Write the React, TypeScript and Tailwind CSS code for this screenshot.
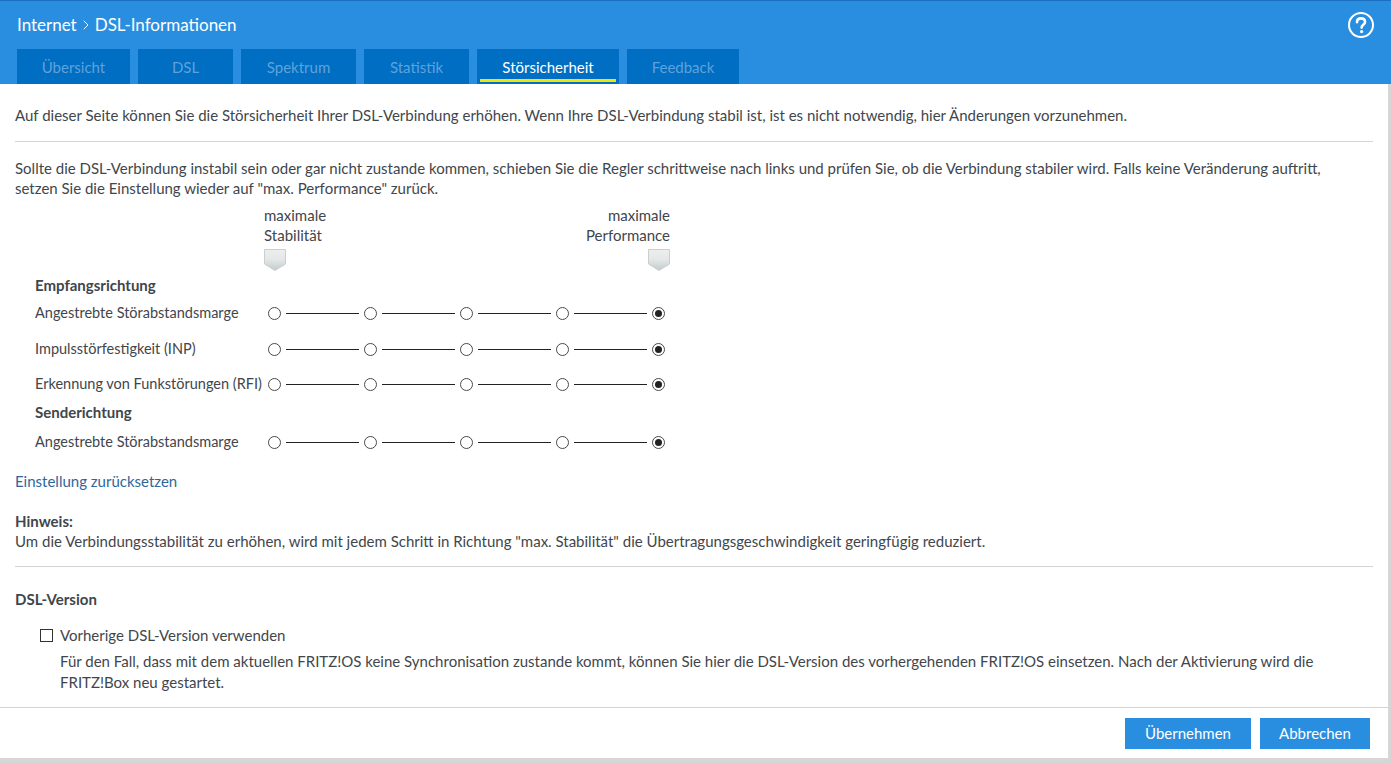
import { ChevronRight } from "lucide-react"

const tabs = [
  { name: "Übersicht", w: "w-[113px]" },
  { name: "DSL", w: "w-[95px]" },
  { name: "Spektrum", w: "w-[115px]" },
  { name: "Statistik", w: "w-[105px]" },
  { name: "Störsicherheit", w: "w-[142px]", active: true },
  { name: "Feedback", w: "w-[112px]" },
]

const Radio = ({ checked }: { checked?: boolean }) => (
  <span className="w-[13px] h-[13px] rounded-full border border-[#4a4a4a] bg-white flex items-center justify-center shrink-0">
    {checked && <span className="w-[7px] h-[7px] rounded-full bg-[#222]"></span>}
  </span>
)

const Track = () => (
  <div className="flex items-center w-[398px]">
    {[0, 1, 2, 3, 4].map((i) => (
      <div key={i} className="flex items-center">
        <Radio checked={i === 4} />
        {i < 4 && <span className="h-px w-[73px] bg-[#222] mx-[5px]"></span>}
      </div>
    ))}
  </div>
)

const Marker = () => (
  <svg width="22" height="22" viewBox="0 0 22 22">
    <defs>
      <linearGradient id="mk" x1="0" y1="0" x2="0" y2="1">
        <stop offset="0" stopColor="#ededed" />
        <stop offset="0.45" stopColor="#e6e8e8" />
        <stop offset="1" stopColor="#c3cccb" />
      </linearGradient>
    </defs>
    <path d="M0.5 0.5 H21.5 V15 L11 21.5 L0.5 15 Z" fill="url(#mk)" stroke="#c9cfcf" strokeWidth="1" />
  </svg>
)

const Row = ({ label, className }: { label: string; className: string }) => (
  <div className={`flex items-center h-5 ${className}`}>
    <span className="w-[253px] pl-5 shrink-0 whitespace-nowrap text-[14.5px]">{label}</span>
    <Track />
  </div>
)

export default function App() {
  return (
    <div
      className="h-screen w-full flex flex-col bg-[#d6d6d6] text-[15px] leading-[20px] text-[#3f464c] overflow-hidden"
      style={{ fontFamily: "Lato, 'Liberation Sans', sans-serif" }}
    >
      {/* HEADER */}
      <div className="h-[84px] bg-[#2a8ee0] border-t border-[#1b6fc0] flex flex-col shrink-0">
        <div className="flex items-center justify-between h-[48px] pl-[17px] pr-[16px]">
          <div className="flex items-center text-white text-[17px]">
            <span>Internet</span>
            <ChevronRight className="size-[16px] mx-[1px]" strokeWidth={1.5} />
            <span>DSL-Informationen</span>
          </div>
          <svg width="28" height="28" viewBox="0 0 28 28" className="text-white">
            <circle cx="14" cy="14" r="12" fill="none" stroke="currentColor" strokeWidth="2" />
            <path d="M10 11.2 C10 8.6 11.8 7.4 14 7.4 C16.3 7.4 18 8.8 18 10.9 C18 13.8 14.6 13.9 14.6 16.6" fill="none" stroke="currentColor" strokeWidth="2.6" strokeLinecap="round" />
            <circle cx="14.6" cy="20.6" r="1.6" fill="currentColor" />
          </svg>
        </div>
        <div className="flex gap-[8px] pl-[17px] h-[35px]">
          {tabs.map((t) => (
            <div
              key={t.name}
              className={`${t.w} h-full bg-[#006ec2] flex items-center justify-center relative text-[15px] ${t.active ? "text-white" : "text-[#5fa2db]"}`}
            >
              {t.name}
              {t.active && <span className="absolute left-[3px] right-[3px] bottom-[2px] h-[3px] bg-[#f2e600]"></span>}
            </div>
          ))}
        </div>
      </div>

      {/* BODY */}
      <div className="flex flex-1 min-h-0">
        <div className="w-[1388px] bg-white flex flex-col h-[674px] shrink-0">
          <div className="flex-1 min-h-0 px-[15px] pt-[21px]">
            <p>
              Auf dieser Seite können Sie die Störsicherheit Ihrer DSL-Verbindung erhöhen. Wenn Ihre DSL-Verbindung stabil ist, ist es nicht notwendig, hier Änderungen vorzunehmen.
            </p>
            <div className="mt-[16px] border-t border-[#d4d4d4]"></div>
            <p className="mt-[16px] pr-[20px]">
              Sollte die DSL-Verbindung instabil sein oder gar nicht zustande kommen, schieben Sie die Regler schrittweise nach links und prüfen Sie, ob die Verbindung stabiler wird. Falls keine Veränderung auftritt, setzen Sie die Einstellung wieder auf "max. Performance" zurück.
            </p>

            {/* SLIDER HEAD */}
            <div className="ml-[249px] w-[406px] mt-[7px]">
              <div className="flex justify-between">
                <span>maximale<br />Stabilität</span>
                <span className="text-right">maximale<br />Performance</span>
              </div>
              <div className="flex justify-between mt-[4px] h-[22px]">
                <Marker />
                <Marker />
              </div>
            </div>

            <p className="font-bold pl-5 mt-[4px]">Empfangsrichtung</p>
            <Row label="Angestrebte Störabstandsmarge" className="mt-[8px]" />
            <Row label="Impulsstörfestigkeit (INP)" className="mt-[16px]" />
            <Row label="Erkennung von Funkstörungen (RFI)" className="mt-[15px]" />
            <p className="font-bold pl-5 mt-[8px]">Senderichtung</p>
            <Row label="Angestrebte Störabstandsmarge" className="mt-[10px]" />

            <p className="mt-[19px] text-[#2f679c]">Einstellung zurücksetzen</p>

            <p className="mt-[20px] font-bold">Hinweis:</p>
            <p>
              Um die Verbindungsstabilität zu erhöhen, wird mit jedem Schritt in Richtung "max. Stabilität" die Übertragungsgeschwindigkeit geringfügig reduziert.
            </p>
            <div className="mt-[15px] border-t border-[#d4d4d4]"></div>

            <p className="mt-[22px] font-bold">DSL-Version</p>
            <div className="mt-[16px] flex items-center pl-[25px] gap-[7px]">
              <span className="w-[13px] h-[13px] border border-[#333] bg-white shrink-0"></span>
              <span>Vorherige DSL-Version verwenden</span>
            </div>
            <p className="mt-[6px] pl-[45px] pr-[40px] leading-[21px]">
              Für den Fall, dass mit dem aktuellen FRITZ!OS keine Synchronisation zustande kommt, können Sie hier die DSL-Version des vorhergehenden FRITZ!OS einsetzen. Nach der Aktivierung wird die FRITZ!Box neu gestartet.
            </p>
          </div>

          {/* FOOTER */}
          <div className="h-[51px] border-t border-[#d4d4d4] flex items-center justify-end gap-[9px] pr-[18px] shrink-0">
            <button className="w-[126px] h-[31px] bg-[#2a8ee0] text-white text-[15px]">Übernehmen</button>
            <button className="w-[110px] h-[31px] bg-[#2a8ee0] text-white text-[15px]">Abbrechen</button>
          </div>
        </div>
      </div>
    </div>
  )
}
